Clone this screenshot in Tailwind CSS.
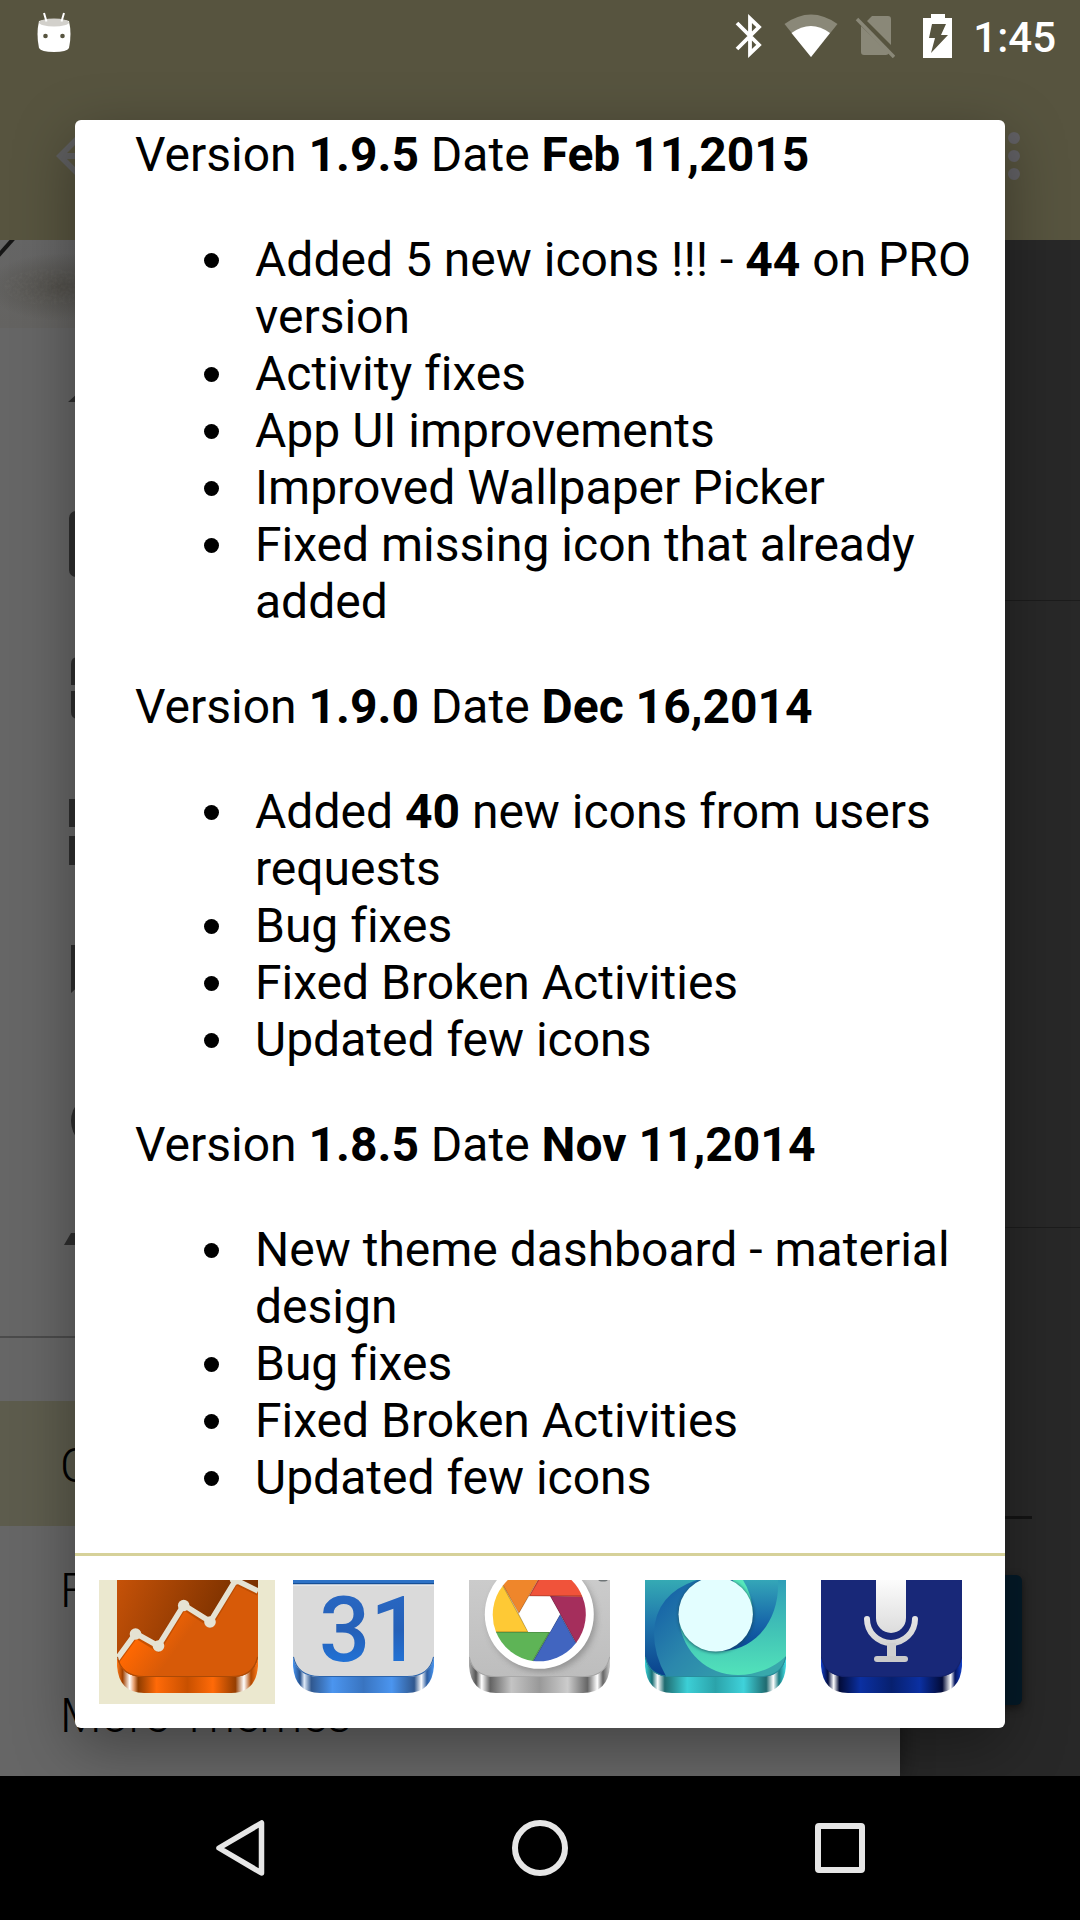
<!DOCTYPE html>
<html lang="en">
<head>
<meta charset="utf-8">
<meta name="viewport" content="width=device-width, initial-scale=1">
<title>Changelog</title>
<script src="https://cdn.jsdelivr.net/npm/@tailwindcss/browser@4"></script>
</head>
<body class="relative flex min-h-screen flex-col overflow-x-hidden bg-black font-['Roboto',sans-serif]">

<!-- Status bar and toolbar -->
<header class="relative z-20 flex h-60 flex-col bg-[#57543f]">
  <div class="flex h-[72px] items-center justify-between pr-6 pl-9">
    <svg class="mt-3 h-[42px] w-9 self-start" viewBox="0 0 36 42" role="img" aria-label="Android notification">
      <path d="M3 9Q18 5 33 9Q36 22 33 36Q31 40 18 40Q5 40 3 36Q0 22 3 9Z" fill="#fff"/>
      <ellipse cx="18" cy="10.500" rx="15" ry="4" fill="#d2d0cb"/>
      <path d="M8 1l2.500 8.500M28 1l-2.500 8.500" stroke="#fff" stroke-width="2"/>
      <circle cx="9.500" cy="24" r="2.300" fill="#57543f"/><circle cx="26.500" cy="24" r="2.300" fill="#57543f"/>
    </svg>
    <div class="flex items-center">
      <svg class="h-11 w-7" viewBox="0 0 28 44" role="img" aria-label="Bluetooth"><path d="M2 9L24 31L15 39.500V4.500L24 13L2 35" fill="none" stroke="#fff" stroke-width="3.800"/></svg>
      <svg class="ml-[21px] h-11 w-[54px]" viewBox="0 0 54 44" role="img" aria-label="Wi-Fi"><path d="M0.500 10Q27 -9 53.500 10L27 43Z" fill="#8a8878"/><path d="M7.500 19Q27 5 46 19L27 43Z" fill="#fff"/></svg>
      <svg class="ml-[17px] h-11 w-10" viewBox="0 0 40 44" role="img" aria-label="No SIM"><path d="M6 12L34 39Q33 41 31 41H9Q6 41 6 38ZM12 7L17 2H33Q36 2 36 5V31Z" fill="#8a8878"/><path d="M2 5L39 43" stroke="#8a8878" stroke-width="3.500"/></svg>
      <svg class="ml-7 h-11 w-[30px]" viewBox="0 0 30 44" role="img" aria-label="Battery charging"><path d="M8 0H22V4H29V44H0V4H8Z" fill="#fff"/><path d="M9 10H23L18 21H25L8 39L12 24H6Z" fill="#57543f"/></svg>
      <time class="ml-5 pt-1 text-[42px] leading-[72px] font-medium text-white">1:45</time>
    </div>
  </div>
  <div class="flex grow items-center justify-between pr-[60px] pl-14">
    <button aria-label="Back"><svg class="size-12" viewBox="0 0 48 48"><path d="M48 21H11L26 6L22 2L0 24L22 46L26 42L11 27H48Z" fill="#5f5f60"/></svg></button>
    <button aria-label="More options"><svg class="h-12 w-3" viewBox="0 0 12 48"><g fill="#626165"><circle cx="6" cy="6" r="6"/><circle cx="6" cy="24" r="6"/><circle cx="6" cy="42" r="6"/></g></svg></button>
  </div>
</header>

<div class="flex grow bg-[#282828]">
  <!-- Navigation drawer -->
  <nav aria-label="Main" class="z-10 flex w-5/6 flex-col bg-[#666] text-[48px] leading-[57px] font-light text-black shadow-[0_0_24px_rgba(0,0,0,0.5)]">
    <div class="h-[88px] overflow-hidden bg-linear-to-b from-[#666] to-[#646361]">
      <svg class="size-full" viewBox="0 0 900 88" preserveAspectRatio="xMinYMin slice" aria-hidden="true">
        <defs>
          <filter id="grain" x="-10%" y="-10%" width="120%" height="120%"><feTurbulence type="fractalNoise" baseFrequency="0.35" numOctaves="2" result="n"/><feColorMatrix in="n" type="matrix" values="0 0 0 0 0.25  0 0 0 0 0.24  0 0 0 0 0.22  0 0 0 2 -0.7"/><feComposite in2="SourceAlpha" operator="in"/></filter>
          <radialGradient id="smudge"><stop offset="0" stop-color="#514f4a"/><stop offset="1" stop-color="#514f4a" stop-opacity="0"/></radialGradient>
        </defs>
        <ellipse cx="62" cy="47" rx="76" ry="34" fill="url(#smudge)"/>
        <ellipse cx="50" cy="47" rx="46" ry="18" filter="url(#grain)" opacity=".12"/>
        <path d="M-2 16L14 -2" stroke="#161616" stroke-width="4"/>
      </svg>
    </div>
    <a href="#" aria-label="Home" class="flex h-36 items-center pl-[62px]"><svg class="size-[72px] shrink-0 fill-[#2e2e2e]" viewBox="0 0 72 72"><path d="M30 63V45H42V63H57V38H66L36 11L6 38H15V63Z"/></svg></a>
    <a href="#" aria-label="Icons" class="flex h-36 items-center pl-[62px]"><svg class="size-[72px] shrink-0 fill-[#2e2e2e]" viewBox="0 0 72 72"><rect x="7" y="3" width="58" height="66" rx="7"/></svg></a>
    <a href="#" aria-label="Apply" class="flex h-36 items-center pl-[62px]"><svg class="size-[72px] shrink-0 fill-[#2e2e2e]" viewBox="0 0 72 72"><path d="M9 33V12Q9 5 16 5H33V33ZM39 5H56Q63 5 63 12V33H39ZM9 39H33V67H16Q9 67 9 60ZM39 39H63V60Q63 67 56 67H39Z"/></svg></a>
    <a href="#" aria-label="Wallpapers" class="flex h-36 items-center pl-[62px]"><svg class="size-[72px] shrink-0 fill-[#2e2e2e]" viewBox="0 0 72 72"><path d="M7 3H33V31H7ZM39 3H65V31H39ZM7 40H33V69H7ZM39 40H65V69H39Z"/></svg></a>
    <a href="#" aria-label="Request" class="flex h-36 items-center pl-[62px]"><svg class="size-[72px] shrink-0 fill-[#2e2e2e]" viewBox="0 0 72 72"><path d="M9 5H63V41H22L9 53Z"/></svg></a>
    <a href="#" aria-label="About" class="flex h-36 items-center pl-[62px]"><svg class="size-[72px] shrink-0 fill-[#2e2e2e]" viewBox="0 0 72 72"><circle cx="37" cy="37" r="28"/></svg></a>
    <a href="#" aria-label="Rate" class="flex h-36 items-center pl-[62px]"><svg class="size-[72px] shrink-0 fill-[#2e2e2e]" viewBox="0 0 72 72"><path d="M2 17L9 5H63L70 17Z"/></svg></a>
    <hr class="border-t-2 border-[#4b4b4b]">
    <div class="flex flex-col pt-[63px]">
      <a href="#" class="flex h-[125px] items-center bg-[#5d5c4d] pt-1 pl-[60px]">Community</a>
      <a href="#" class="flex h-[125px] items-center pt-1 pl-[60px]">FAQ</a>
      <a href="#" class="flex h-[125px] items-center pt-1 pl-[60px]">More Themes</a>
    </div>
  </nav>

  <!-- Dimmed page content -->
  <main class="flex grow flex-col">
    <div class="h-[361px] border-b border-[#1c1c1c]"></div>
    <div class="h-[627px] border-b border-[#1c1c1c]"></div>
    <div class="pt-72 pr-12"><div class="h-[3px] bg-[#141414]"></div></div>
    <button aria-label="Submit" class="mt-14 mr-[58px] h-[130px] rounded-md bg-[#041a28] shadow-[0_3px_9px_rgba(0,0,0,0.5)]"></button>
  </main>
</div>

<!-- System navigation -->
<footer class="z-30 grid h-36 grid-cols-3 bg-black px-[90px]">
  <button aria-label="Back" class="flex items-center justify-center"><svg class="size-[60px]" viewBox="0 0 60 60"><path d="M51.500 5V55L9 30Z" fill="none" stroke="#e6e6e6" stroke-width="5.500" stroke-linejoin="round"/></svg></button>
  <button aria-label="Home" class="flex items-center justify-center"><svg class="size-[60px]" viewBox="0 0 60 60"><circle cx="30" cy="30" r="25" fill="none" stroke="#e6e6e6" stroke-width="6"/></svg></button>
  <button aria-label="Recent apps" class="flex items-center justify-center"><svg class="size-[60px]" viewBox="0 0 60 60"><rect x="8" y="8" width="44" height="44" rx="1" fill="none" stroke="#e6e6e6" stroke-width="6" stroke-linejoin="round"/></svg></button>
</footer>

<!-- Changelog dialog -->
<section role="dialog" aria-label="Changelog" class="absolute inset-x-[75px] top-[120px] z-20 overflow-hidden rounded-md bg-white shadow-[0_18px_60px_rgba(0,0,0,0.35)]">
  <div class="flex flex-col gap-12 pt-1.5 pr-6 pb-[47px] pl-[60px] text-[48px] leading-[57px] text-black [font-variant-ligatures:none]">
    <p>Version <b>1.9.5</b> Date <b>Feb 11,2015</b></p>
    <ul class="list-disc pl-[106px]">
      <li class="pl-3.5">Added 5 new icons !!! - <b>44</b> on PRO version</li>
      <li class="pl-3.5">Activity fixes</li>
      <li class="pl-3.5">App UI improvements</li>
      <li class="pl-3.5">Improved Wallpaper Picker</li>
      <li class="pl-3.5">Fixed missing icon that already added</li>
    </ul>
    <p>Version <b>1.9.0</b> Date <b>Dec 16,2014</b></p>
    <ul class="list-disc pl-[106px]">
      <li class="pl-3.5">Added <b>40</b> new icons from users requests</li>
      <li class="pl-3.5">Bug fixes</li>
      <li class="pl-3.5">Fixed Broken Activities</li>
      <li class="pl-3.5">Updated few icons</li>
    </ul>
    <p>Version <b>1.8.5</b> Date <b>Nov 11,2014</b></p>
    <ul class="list-disc pl-[106px]">
      <li class="pl-3.5">New theme dashboard - material design</li>
      <li class="pl-3.5">Bug fixes</li>
      <li class="pl-3.5">Fixed Broken Activities</li>
      <li class="pl-3.5">Updated few icons</li>
    </ul>
  </div>

  <div class="flex border-t-3 border-[#d6d199] p-6">
    <button aria-label="Stocks" class="flex h-[124px] w-44 justify-center bg-[#ebe8cf]">
      <svg class="h-[113px] w-[141px]" viewBox="0 0 141 113">
        <defs>
          <linearGradient id="rimO"><stop offset="0" stop-color="#ff7a1a"/><stop offset=".04" stop-color="#a04000"/><stop offset=".09" stop-color="#fff"/><stop offset=".12" stop-color="#e8a070"/><stop offset=".15" stop-color="#8e3c00"/><stop offset=".28" stop-color="#ff6a08"/><stop offset=".5" stop-color="#c85000"/><stop offset=".68" stop-color="#ff6a08"/><stop offset=".84" stop-color="#963e00"/><stop offset=".9" stop-color="#fff"/><stop offset=".95" stop-color="#b04800"/><stop offset="1" stop-color="#ff7a1a"/></linearGradient>
          <linearGradient id="skyO" x1="0" y1="0" x2="1" y2=".3"><stop offset="0" stop-color="#c65208"/><stop offset=".75" stop-color="#823400"/><stop offset="1" stop-color="#7a3000"/></linearGradient>
          <linearGradient id="hillO" x1="0" y1="0" x2="1" y2=".5"><stop offset=".35" stop-color="#ff6802"/><stop offset=".62" stop-color="#d75a08"/></linearGradient>
          <clipPath id="face"><path d="M0 0H141V77Q137 97 114 97H27Q4 97 0 77Z"/></clipPath>
          <clipPath id="tile"><path d="M0 0H141V86Q139 113 114 113H27Q2 113 0 86Z"/></clipPath>
        </defs>
        <rect width="141" height="113" fill="url(#rimO)" clip-path="url(#tile)"/>
        <g clip-path="url(#face)">
          <rect width="141" height="98" fill="url(#skyO)"/>
          <path d="M0 79L18.700 53.300L41.300 67.300L66.700 25L93.300 42.700L118.700 0L141 11V98H0Z" fill="url(#hillO)"/>
          <path d="M0 81L18.700 55.300L41.300 69.300L66.700 27L93.300 44.700L118.700 2L141 13" fill="none" stroke="#a84400" stroke-opacity=".6" stroke-width="5.500"/>
          <g fill="#e5e2d3"><path d="M0 79L18.700 53.300L41.300 66L66.700 25L93.300 41.700L118.700 0L141 11" fill="none" stroke="#e5e2d3" stroke-width="5.500"/><circle cx="18.500" cy="54" r="5.800"/><circle cx="41.500" cy="66" r="5.800"/><circle cx="66.700" cy="25.500" r="5.800"/><circle cx="93" cy="42" r="5.800"/><circle cx="118.500" cy="-1" r="5.800"/></g>
          <path d="M0 77Q4 97 27 97H114Q137 97 141 77" fill="none" stroke="#ab4a06" stroke-width="2"/>
        </g>
      </svg>
    </button>
    <button aria-label="Calendar" class="flex h-[124px] w-44 justify-center">
      <svg class="h-[113px] w-[141px]" viewBox="0 0 141 113">
        <defs>
          <linearGradient id="rimB"><stop offset="0" stop-color="#4a96f0"/><stop offset=".05" stop-color="#25508c"/><stop offset=".08" stop-color="#dfeaf8"/><stop offset=".13" stop-color="#30588f"/><stop offset=".28" stop-color="#4b95ef"/><stop offset=".5" stop-color="#3974c0"/><stop offset=".7" stop-color="#4b95ef"/><stop offset=".86" stop-color="#30588f"/><stop offset=".91" stop-color="#fff"/><stop offset=".95" stop-color="#2b5ca0"/><stop offset="1" stop-color="#4a96f0"/></linearGradient>
          <linearGradient id="num" x1="0" y1="0" x2="0" y2="1"><stop offset="0" stop-color="#2a6ac6"/><stop offset=".5" stop-color="#2560b8"/><stop offset="1" stop-color="#1f7de8"/></linearGradient>
        </defs>
        <rect width="141" height="113" fill="url(#rimB)" clip-path="url(#tile)"/>
        <g clip-path="url(#face)">
          <rect width="141" height="98" fill="#dadada"/>
          <rect width="141" height="4" fill="#2d72c6"/><rect y="3" width="141" height="1.500" fill="#174f96"/><rect y="4.500" width="141" height="1" fill="#f4f4f4"/>
          <path d="M0 77Q4 97 27 97H114Q137 97 141 77" fill="none" stroke="#2b64ad" stroke-width="2"/>
        </g>
        <text x="26" y="81" font-size="90" font-weight="500" font-family="Roboto, sans-serif" fill="url(#num)">31</text>
      </svg>
    </button>
    <button aria-label="Camera" class="flex h-[124px] w-44 justify-center">
      <svg class="h-[113px] w-[141px]" viewBox="0 0 141 113">
        <defs>
          <linearGradient id="rimG"><stop offset="0" stop-color="#aaa"/><stop offset=".05" stop-color="#555"/><stop offset=".09" stop-color="#fff"/><stop offset=".15" stop-color="#636363"/><stop offset=".3" stop-color="#c4c4c4"/><stop offset=".5" stop-color="#999"/><stop offset=".7" stop-color="#ccc"/><stop offset=".84" stop-color="#666"/><stop offset=".91" stop-color="#fff"/><stop offset=".95" stop-color="#666"/><stop offset="1" stop-color="#ccc"/></linearGradient>
          <filter id="soft" x="-20%" y="-20%" width="140%" height="140%"><feGaussianBlur stdDeviation="3"/></filter>
          <linearGradient id="plate" x1="0" y1="0" x2="0" y2="1"><stop offset="0" stop-color="#cbcbcb"/><stop offset="1" stop-color="#bdbdbd"/></linearGradient>
        </defs>
        <rect width="141" height="113" fill="url(#rimG)" clip-path="url(#tile)"/>
        <g clip-path="url(#face)">
          <rect width="141" height="98" fill="url(#plate)"/>
          <ellipse cx="134" cy="-1" rx="5" ry="2.500" fill="#6e7476"/>
          <circle cx="73" cy="38" r="54" fill="#777" opacity=".6" filter="url(#soft)"/>
          <circle cx="70.300" cy="34.300" r="54.500" fill="#fff"/>
          <path d="M60 16L76 -13A47 47 0 0 1 113.500 17Z" fill="#f0533a"/>
          <path d="M81 16L113.500 17A47 47 0 0 1 107 63Z" fill="#a52e5c"/>
          <path d="M91 34.300L107 63A47 47 0 0 1 64 81Z" fill="#4165c0"/>
          <path d="M81 52L64 81A47 47 0 0 1 27 52Z" fill="#5eb456"/>
          <path d="M59.300 52H27A47 47 0 0 1 34 5.500Z" fill="#fec935"/>
          <path d="M50 33.500L34 5.500A47 47 0 0 1 76 -13Z" fill="#ef862b"/>
          <path d="M60 16H113M81 16L107 63M91 34.300L64 81M81 52H27M59.300 52L34 5.500M50 33.500L70 -1" stroke="#000" stroke-opacity=".22" stroke-width="1.500"/>
          <path d="M60 16.500H81L91 34.300L81 52H59.300L50 33.500Z" fill="#fff"/>
          <path d="M0 77Q4 97 27 97H114Q137 97 141 77" fill="none" stroke="#a2a2a2" stroke-width="1.500"/>
        </g>
      </svg>
    </button>
    <button aria-label="Browser" class="flex h-[124px] w-44 justify-center">
      <svg class="h-[113px] w-[141px]" viewBox="0 0 141 113">
        <defs>
          <linearGradient id="rimT"><stop offset="0" stop-color="#3dd0d6"/><stop offset=".05" stop-color="#176e74"/><stop offset=".09" stop-color="#fff"/><stop offset=".14" stop-color="#1f6b70"/><stop offset=".3" stop-color="#3ccfd6"/><stop offset=".5" stop-color="#2ba3aa"/><stop offset=".7" stop-color="#3fd2da"/><stop offset=".86" stop-color="#1f6b70"/><stop offset=".91" stop-color="#fff"/><stop offset=".95" stop-color="#1a7c82"/><stop offset="1" stop-color="#46e0e6"/></linearGradient>
          <linearGradient id="t1" x1="0" y1="0" x2="0" y2="1"><stop offset="0" stop-color="#35aab4"/><stop offset=".45" stop-color="#1f75ac"/><stop offset="1" stop-color="#083f8c"/></linearGradient>
          <linearGradient id="t2" x1="0" y1="0" x2="1" y2=".7"><stop offset="0" stop-color="#1058a5"/><stop offset=".5" stop-color="#2b87ac"/><stop offset="1" stop-color="#38a8ac"/></linearGradient>
          <linearGradient id="t3" x1="0" y1="0" x2="0" y2="1"><stop offset="0" stop-color="#2f9eb8"/><stop offset=".55" stop-color="#42c4b6"/><stop offset="1" stop-color="#52e2ba"/></linearGradient>
          <linearGradient id="t4" x1="0" y1="0" x2="0" y2="1"><stop offset="0" stop-color="#34a6b8"/><stop offset=".6" stop-color="#1767aa"/><stop offset="1" stop-color="#0a4494"/></linearGradient>
          <filter id="edge" x="-20%" y="-20%" width="140%" height="140%"><feGaussianBlur stdDeviation="1.500"/></filter>
        </defs>
        <rect width="141" height="113" fill="url(#rimT)" clip-path="url(#tile)"/>
        <g clip-path="url(#face)">
          <rect width="141" height="98" fill="url(#t1)"/>
          <path d="M52 0Q10 14 9 53Q9 76 22 98H141V0Z" fill="url(#t2)"/>
          <path d="M34.300 42C38 72 62 95 93 95C112 95 130 87 141 76V0H88L60 60Z" fill="url(#t3)"/>
          <path d="M88 0H133C135 36 114 69 78 71L60 40Z" fill="url(#t4)"/>
          <path d="M88 0H98Q107 14 108 34L90 20Z" fill="#56e8bb"/>
          <circle cx="71" cy="35" r="38" fill="#164a60" opacity=".7" filter="url(#edge)"/>
          <circle cx="70.700" cy="34.300" r="37.200" fill="#e3feff"/>
          <path d="M0 77Q4 97 27 97H114Q137 97 141 77" fill="none" stroke="#268c96" stroke-width="1.500"/>
        </g>
      </svg>
    </button>
    <button aria-label="Voice search" class="flex h-[124px] w-44 justify-center">
      <svg class="h-[113px] w-[141px]" viewBox="0 0 141 113">
        <defs>
          <linearGradient id="rimN"><stop offset="0" stop-color="#1440c8"/><stop offset=".05" stop-color="#020d40"/><stop offset=".09" stop-color="#fff"/><stop offset=".13" stop-color="#020b38"/><stop offset=".28" stop-color="#0b30a2"/><stop offset=".5" stop-color="#07206f"/><stop offset=".7" stop-color="#0b30a2"/><stop offset=".86" stop-color="#020b38"/><stop offset=".92" stop-color="#fff"/><stop offset=".95" stop-color="#041560"/><stop offset="1" stop-color="#1440c8"/></linearGradient>
          <linearGradient id="mic" gradientUnits="userSpaceOnUse" x1="0" y1="0" x2="0" y2="82"><stop offset="0" stop-color="#fcfcfc"/><stop offset=".65" stop-color="#dcdcdc"/><stop offset="1" stop-color="#c8c8c8"/></linearGradient>
        </defs>
        <rect width="141" height="113" fill="url(#rimN)" clip-path="url(#tile)"/>
        <g clip-path="url(#face)">
          <rect width="141" height="98" fill="#182878"/>
          <path d="M55 0H85V38A15 15 0 0 1 55 38Z" fill="url(#mic)"/>
          <path d="M46 39A24 24 0 0 0 94 39" fill="none" stroke="url(#mic)" stroke-width="6" stroke-linecap="round"/>
          <rect x="66" y="63" width="9" height="15" fill="#d0d0d0"/><rect x="53" y="76" width="34" height="6" rx="3" fill="#cacaca"/>
          <path d="M0 77Q4 97 27 97H114Q137 97 141 77" fill="none" stroke="#15236c" stroke-width="1.500"/>
        </g>
      </svg>
    </button>
  </div>
</section>
</body>
</html>
